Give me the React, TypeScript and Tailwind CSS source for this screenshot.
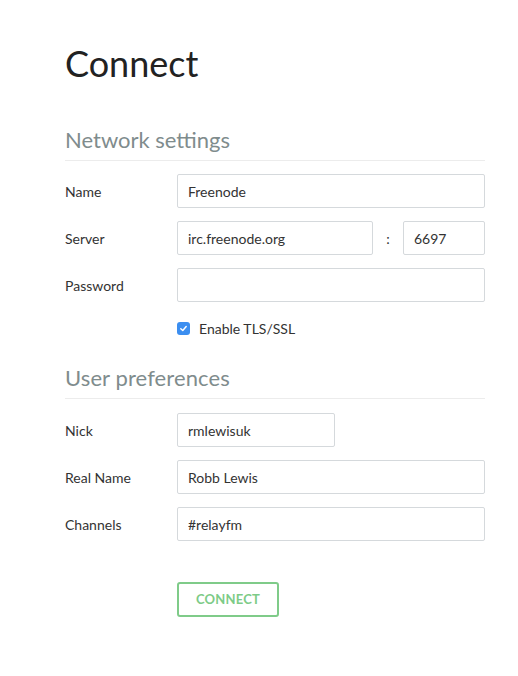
import React from "react";

const inputCls =
  "h-[34px] border border-[#d5d9dc] rounded-[2px] px-[10px] text-[14px] text-[#333] bg-white outline-none";

function Row({ label, children }: { label: string; children: React.ReactNode }) {
  return (
    <div className="flex items-center h-[34px] mb-[13px]">
      <label className="w-[112px] text-[14px] text-[#333]">{label}</label>
      {children}
    </div>
  );
}

export default function App() {
  return (
    <div
      className="w-[518px] h-[676px] bg-white"
      style={{ fontFamily: "Lato, 'Open Sans', sans-serif" }}
    >
      <div className="pl-[65px] w-[485px] pt-[42px]">
        <h1 className="text-[36px] leading-[43px] text-[#222] font-normal">Connect</h1>

        <div className="mt-[42px] border-b border-[#ececec] pb-[7px] mb-[13px]">
          <h2 className="text-[22px] leading-[26px] text-[#7f8c8d]">Network settings</h2>
        </div>

        <Row label="Name">
          <input className={`${inputCls} flex-1`} defaultValue="Freenode" />
        </Row>
        <Row label="Server">
          <input className={`${inputCls} w-[196px]`} defaultValue="irc.freenode.org" />
          <span className="w-[30px] text-center text-[14px] text-[#333]">:</span>
          <input className={`${inputCls} flex-1 min-w-0`} defaultValue="6697" />
        </Row>
        <Row label="Password">
          <input className={`${inputCls} flex-1`} type="password" />
        </Row>

        <div className="flex items-center h-[20px] mt-[16px] pl-[112px]">
          <span className="w-[13px] h-[13px] rounded-[3px] bg-[#3b8ef0] flex items-center justify-center">
            <svg width="9" height="9" viewBox="0 0 10 10">
              <path d="M2 5.2 L4.2 7.3 L8 2.8" fill="none" stroke="white" strokeWidth="1.6" strokeLinecap="round" strokeLinejoin="round" />
            </svg>
          </span>
          <span className="ml-[9px] text-[14px] text-[#333]">Enable TLS/SSL</span>
        </div>

        <div className="mt-[27px] border-b border-[#ececec] pb-[7px] mb-[14px]">
          <h2 className="text-[22px] leading-[26px] text-[#7f8c8d] tracking-[0.1px]">User preferences</h2>
        </div>

        <Row label="Nick">
          <input className={`${inputCls} w-[158px]`} defaultValue="rmlewisuk" />
        </Row>
        <Row label="Real Name">
          <input className={`${inputCls} flex-1`} defaultValue="Robb Lewis" />
        </Row>
        <Row label="Channels">
          <input className={`${inputCls} flex-1`} defaultValue="#relayfm" />
        </Row>

        <div className="pl-[112px] mt-[41px]">
          <button className="w-[102px] h-[35px] border-2 border-[#7fcb89] rounded-[3px] text-[13px] font-bold tracking-[0.2px] text-[#7dcb87] bg-white">
            CONNECT
          </button>
        </div>
      </div>
    </div>
  );
}
